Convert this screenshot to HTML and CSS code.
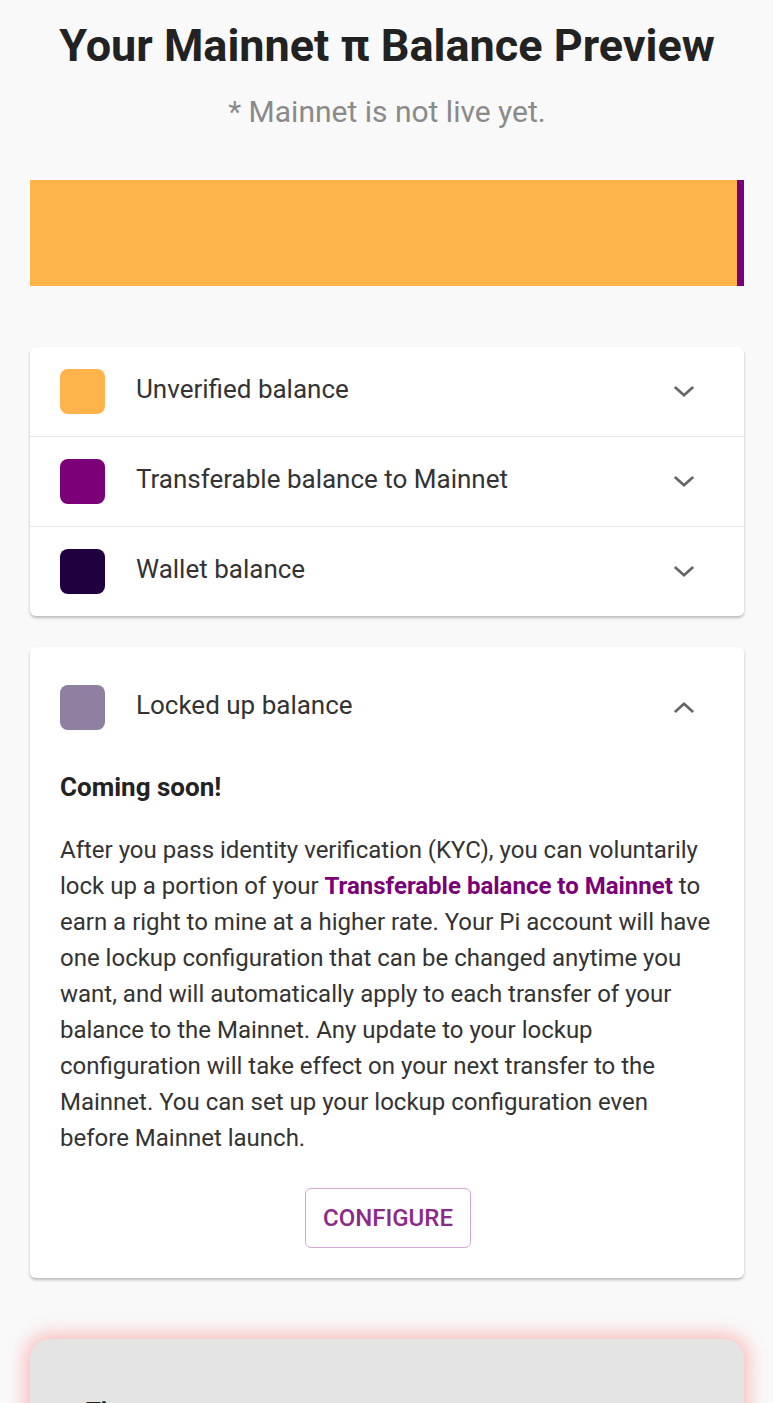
FILE: index.html
```html
<!DOCTYPE html>
<html lang="en">

<head>
    <meta charset="utf-8" />
    <meta name="viewport" content="width=device-width, initial-scale=1.0" />
    <title>Your Mainnet Balance Preview</title>
    <link rel="stylesheet" href="styles.css">
</head>

<body>
    <div class="page">
        <h1 class="title">Your Mainnet π Balance Preview</h1>
        <p class="subtitle">* Mainnet is not live yet.</p>

        <!-- stacked balance bar -->
        <div class="balance-bar">
            <div class="bar-unverified"></div>
            <div class="bar-transferable"></div>
        </div>

        <div class="card">
            <div class="row">
                <span class="swatch swatch-unverified"></span>
                <span class="row-label">Unverified balance</span>
                <svg class="chevron" viewBox="0 0 24 14"><polyline points="2,2 12,11 22,2" /></svg>
            </div>
            <div class="row">
                <span class="swatch swatch-transferable"></span>
                <span class="row-label">Transferable balance to Mainnet</span>
                <svg class="chevron" viewBox="0 0 24 14"><polyline points="2,2 12,11 22,2" /></svg>
            </div>
            <div class="row">
                <span class="swatch swatch-wallet"></span>
                <span class="row-label">Wallet balance</span>
                <svg class="chevron" viewBox="0 0 24 14"><polyline points="2,2 12,11 22,2" /></svg>
            </div>
        </div>

        <div class="card card-open">
            <div class="row row-open">
                <span class="swatch swatch-locked"></span>
                <span class="row-label">Locked up balance</span>
                <svg class="chevron" viewBox="0 0 24 14"><polyline points="2,12 12,3 22,12" /></svg>
            </div>
            <div class="details">
                <h3 class="details-title">Coming soon!</h3>
                <p class="details-text">After you pass identity verification (KYC), you can voluntarily
                    lock up a portion of your <b class="highlight">Transferable balance to Mainnet</b> to
                    earn a right to mine at a higher rate. Your Pi account will have one lockup
                    configuration that can be changed anytime you want, and will automatically apply
                    to each transfer of your balance to the Mainnet. Any update to your lockup
                    configuration will take effect on your next transfer to the Mainnet. You can set
                    up your lockup configuration even before Mainnet launch.</p>
                <div class="actions">
                    <button class="configure">CONFIGURE</button>
                </div>
            </div>
        </div>

        <div class="notice">
            <h3 class="notice-title">Tips</h3>
        </div>
    </div>
</body>

</html>
```

FILE: styles.css
```css
html {
    font-family: Roboto, "Noto Sans", sans-serif;
    color: #333;
}

body {
    margin: 0;
    background: #f9f9f9;
}

.page {
    padding: 0 29px 40px 30px;
}

.title {
    margin: 0;
    padding-top: 22px;
    font-size: 45px;
    line-height: 48px;
    font-weight: 700;
    text-align: center;
    color: #222;
}

.subtitle {
    margin: 24px 0 0;
    font-size: 30px;
    line-height: 36px;
    text-align: center;
    color: #8a8a8a;
}

.balance-bar {
    display: flex;
    height: 106px;
    margin-top: 50px;
}

.bar-unverified {
    flex: 1;
    background: #ffb34a;
}

.bar-transferable {
    width: 7px;
    background: #7b0077;
}

.card {
    margin-top: 61px;
    background: #fff;
    border-radius: 6px;
    box-shadow: 0 2px 3px rgba(0, 0, 0, 0.25);
}

.card-open {
    margin-top: 31px;
    padding-bottom: 30px;
}

.row {
    display: flex;
    align-items: center;
    height: 89px;
    padding: 0 49px 0 30px;
    border-top: 1px solid #e6e6e6;
}

.row:first-child {
    border-top: none;
}

.row-open {
    height: auto;
    padding-top: 38px;
}

.swatch {
    width: 45px;
    height: 45px;
    border-radius: 8px;
    flex-shrink: 0;
}

.swatch-unverified {
    background: #ffb34a;
}

.swatch-transferable {
    background: #7b0077;
}

.swatch-wallet {
    background: #20003f;
}

.swatch-locked {
    background: #8f7fa0;
}

.row-label {
    flex: 1;
    margin-left: 31px;
    margin-bottom: 5px;
    font-size: 26px;
    color: #333;
}

.chevron {
    width: 22px;
    height: 13px;
    fill: none;
    stroke: #666;
    stroke-width: 3;
}

.details {
    padding: 0 28px 0 30px;
}

.details-title {
    margin: 42px 0 0;
    font-size: 26px;
    line-height: 30px;
    font-weight: 700;
    color: #222;
}

.details-text {
    margin: 30px 0 0;
    font-size: 24px;
    line-height: 36px;
    color: #333;
}

.highlight {
    color: #7b0077;
}

.actions {
    display: flex;
    justify-content: center;
    margin-top: 32px;
}

.configure {
    width: 166px;
    height: 60px;
    border: 1px solid #d2a8d2;
    border-radius: 6px;
    background: #fff;
    font-family: Roboto, sans-serif;
    font-size: 24px;
    font-weight: 500;
    color: #8b2a89;
}

.notice {
    margin-top: 61px;
    height: 200px;
    padding: 57px 56px 0;
    background: #e4e4e4;
    border-radius: 20px;
    box-shadow: 0 0 18px 5px rgba(255, 90, 90, 0.38);
}

.notice-title {
    margin: 0;
    font-size: 24px;
    line-height: 30px;
    color: #222;
}
```
